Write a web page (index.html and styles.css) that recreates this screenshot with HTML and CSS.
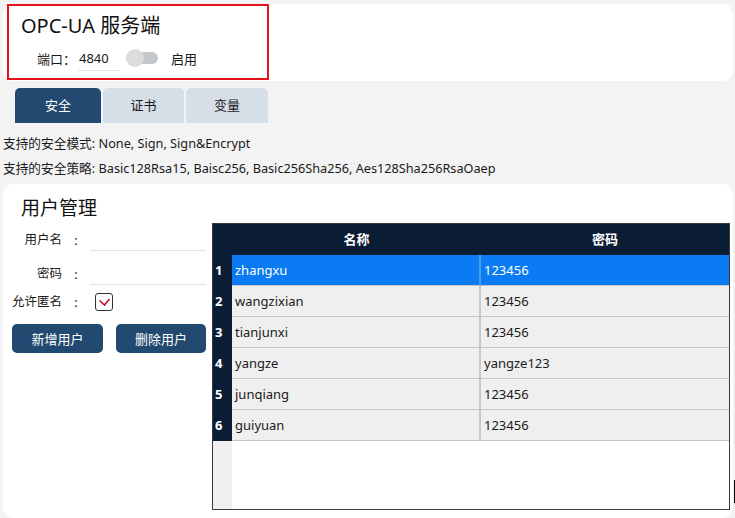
FILE: index.html
```html
<!DOCTYPE html>
<html lang="zh">
<head>
<meta charset="utf-8">
<title>OPC-UA 服务端</title>
<link rel="stylesheet" href="styles.css">
</head>
<body>
<div class="card top-card">
  <div class="highlight">
    <h1 class="title">OPC-UA 服务端</h1>
    <div class="port-row">
      <span class="port-label">端口：</span>
      <span class="port-input">4840</span>
      <span class="toggle"><span class="knob"></span></span>
      <span class="toggle-label">启用</span>
    </div>
  </div>
</div>

<div class="tabs">
  <div class="tab active">安全</div>
  <div class="tab">证书</div>
  <div class="tab">变量</div>
</div>

<div class="info">
  <p>支持的安全模式: None, Sign, Sign&amp;Encrypt</p>
  <p>支持的安全策略: Basic128Rsa15, Baisc256, Basic256Sha256, Aes128Sha256RsaOaep</p>
</div>

<div class="card bottom-card">
  <h2 class="section-title">用户管理</h2>
  <div class="user-body">
    <div class="form">
      <div class="form-row">
        <span class="label">用户名</span><span class="colon">:</span><span class="input"></span>
      </div>
      <div class="form-row">
        <span class="label">密码</span><span class="colon">:</span><span class="input"></span>
      </div>
      <div class="form-row check-row">
        <span class="label">允许匿名</span><span class="colon">:</span>
        <span class="checkbox">
          <svg width="13" height="10" viewBox="0 0 13 10"><path d="M1.5 3.5 L6.5 8 L11.5 2" fill="none" stroke="#c8102e" stroke-width="1.6"/></svg>
        </span>
      </div>
      <div class="buttons">
        <button class="btn btn-add">新增用户</button>
        <button class="btn btn-del">删除用户</button>
      </div>
    </div>
    <div class="table">
      <div class="thead">
        <div class="rn"></div>
        <div class="th c1">名称</div>
        <div class="th c2">密码</div>
      </div>
      <div class="tr selected"><div class="rn">1</div><div class="td c1">zhangxu</div><div class="td c2">123456</div></div>
      <div class="tr"><div class="rn">2</div><div class="td c1">wangzixian</div><div class="td c2">123456</div></div>
      <div class="tr"><div class="rn">3</div><div class="td c1">tianjunxi</div><div class="td c2">123456</div></div>
      <div class="tr"><div class="rn">4</div><div class="td c1">yangze</div><div class="td c2">yangze123</div></div>
      <div class="tr"><div class="rn">5</div><div class="td c1">junqiang</div><div class="td c2">123456</div></div>
      <div class="tr"><div class="rn">6</div><div class="td c1">guiyuan</div><div class="td c2">123456</div></div>
      <div class="tfill"><div class="rn-empty"></div><div class="empty"></div></div>
    </div>
  </div>
  <span class="edge-mark"></span>
</div>
</body>
</html>
```
FILE: styles.css
```css
* { box-sizing: border-box; }
html, body { margin: 0; padding: 0; }
body {
  background: #f3f3f3;
  font-family: "Noto Sans", "Noto Sans CJK SC", sans-serif;
  font-size: 13px;
  color: #1a1a1a;
  width: 735px;
  height: 518px;
  overflow: hidden;
}
.card {
  background: #ffffff;
  border-radius: 10px;
  margin-left: 3px;
  width: 730px;
}
.top-card {
  margin-top: 4px;
  height: 77px;
  padding-left: 4px;
}
.highlight {
  width: 262px;
  height: 76px;
  border: 2px solid #e3141b;
  padding: 7px 0 0 12px;
}
.title {
  margin: 0;
  font-size: 20px;
  font-weight: 400;
  line-height: 26px;
  color: #111;
}
.port-row {
  display: flex;
  align-items: center;
  margin-top: 4px;
  height: 30px;
}
.port-label { margin-left: 16px; width: 41px; white-space: nowrap; }
.port-input {
  width: 42px;
  padding-left: 1px;
  height: 26px;
  line-height: 26px;
  border-bottom: 1px solid #e2e2e2;
  margin-top: 0;
}
.toggle {
  margin-left: 6px;
  width: 32px;
  height: 12px;
  border-radius: 6px;
  background: #c3c7cc;
  position: relative;
}
.knob {
  position: absolute;
  left: 0;
  top: -3px;
  width: 18px;
  height: 18px;
  border-radius: 50%;
  background: #dcdcdc;
}
.toggle-label { margin-left: 13px; }

.tabs {
  display: flex;
  gap: 2px;
  margin: 7px 0 0 15px;
}
.tab {
  height: 35px;
  width: 81px;
  line-height: 35px;
  text-align: center;
  background: #d6dee7;
  border-radius: 5px 5px 0 0;
  color: #1a1a1a;
}
.tab.active {
  width: 86px;
  background: #224a70;
  color: #ffffff;
}
.tab:last-child { width: 82px; }

.info { margin-top: 8px; padding-left: 3px; }
.info p { margin: 0; line-height: 25px; font-size: 12.7px; white-space: nowrap; }

.bottom-card {
  margin-top: 3px;
  height: 334px;
  position: relative;
  padding-top: 11px;
}
.section-title {
  margin: 0 0 2px 18px;
  font-size: 19px;
  font-weight: 400;
  line-height: 26px;
  color: #111;
}
.user-body { display: flex; }
.form { width: 209px; padding-left: 9px; padding-top: 4px; flex: none; }
.form-row { display: flex; align-items: flex-end; height: 24px; margin-bottom: 10px; }
.label { width: 50px; text-align: right; line-height: 22px; font-size: 12.5px; white-space: nowrap; flex: none; }
.colon { width: 28px; text-align: center; line-height: 22px; flex: none; }
.input { width: 116px; height: 24px; border-bottom: 1px solid #e2e2e2; }
.check-row { align-items: center; height: 18px; margin-top: -2px; margin-bottom: 13px; }
.check-row .label, .check-row .colon { line-height: 18px; }
.checkbox {
  margin-left: 5px;
  width: 18px;
  height: 18px;
  border: 1.5px solid #333;
  border-radius: 3px;
  display: flex;
  align-items: center;
  justify-content: center;
}
.buttons { display: flex; gap: 13px; }
.btn {
  height: 29px;
  border: none;
  border-radius: 5px;
  background: #224a70;
  color: #ffffff;
  font-family: inherit;
  font-size: 13px;
  padding: 0;
}
.btn-add { width: 91px; }
.btn-del { width: 90px; }

.table {
  width: 518px;
  height: 287px;
  border: 1px solid #3a3a3a;
  display: flex;
  flex-direction: column;
  background: #ffffff;
  flex: none;
}
.thead, .tr { display: flex; }
.thead { height: 31px; background: #0b1d35; color: #fff; }
.rn {
  width: 19px;
  flex: none;
  background: #0b1d35;
  color: #fff;
  font-weight: 700;
  padding-left: 2px;
}
.th { text-align: center; line-height: 31px; font-weight: 700; }
.c1 { width: 249px; flex: none; }
.c2 { flex: 1; }
.tr { height: 31px; line-height: 30px; }
.tr .rn { line-height: 30px; }
.td {
  background: #efefef;
  border-bottom: 1px solid #c6c6c6;
  padding-left: 3px;
}
.td.c1 { border-right: 2px solid #c8c8c8; }
.tr.selected .td { background: #0a7bf2; color: #fff; border-bottom-color: #c6c6c6; }
.tr.selected .td.c1 { border-right-color: #4c9cf0; }
.tfill { flex: 1; display: flex; }
.rn-empty { width: 19px; background: #f0f0f0; }
.empty { flex: 1; }
.edge-mark {
  position: absolute;
  right: -3px;
  top: 296px;
  width: 2px;
  height: 23px;
  background: #000;
}
```
